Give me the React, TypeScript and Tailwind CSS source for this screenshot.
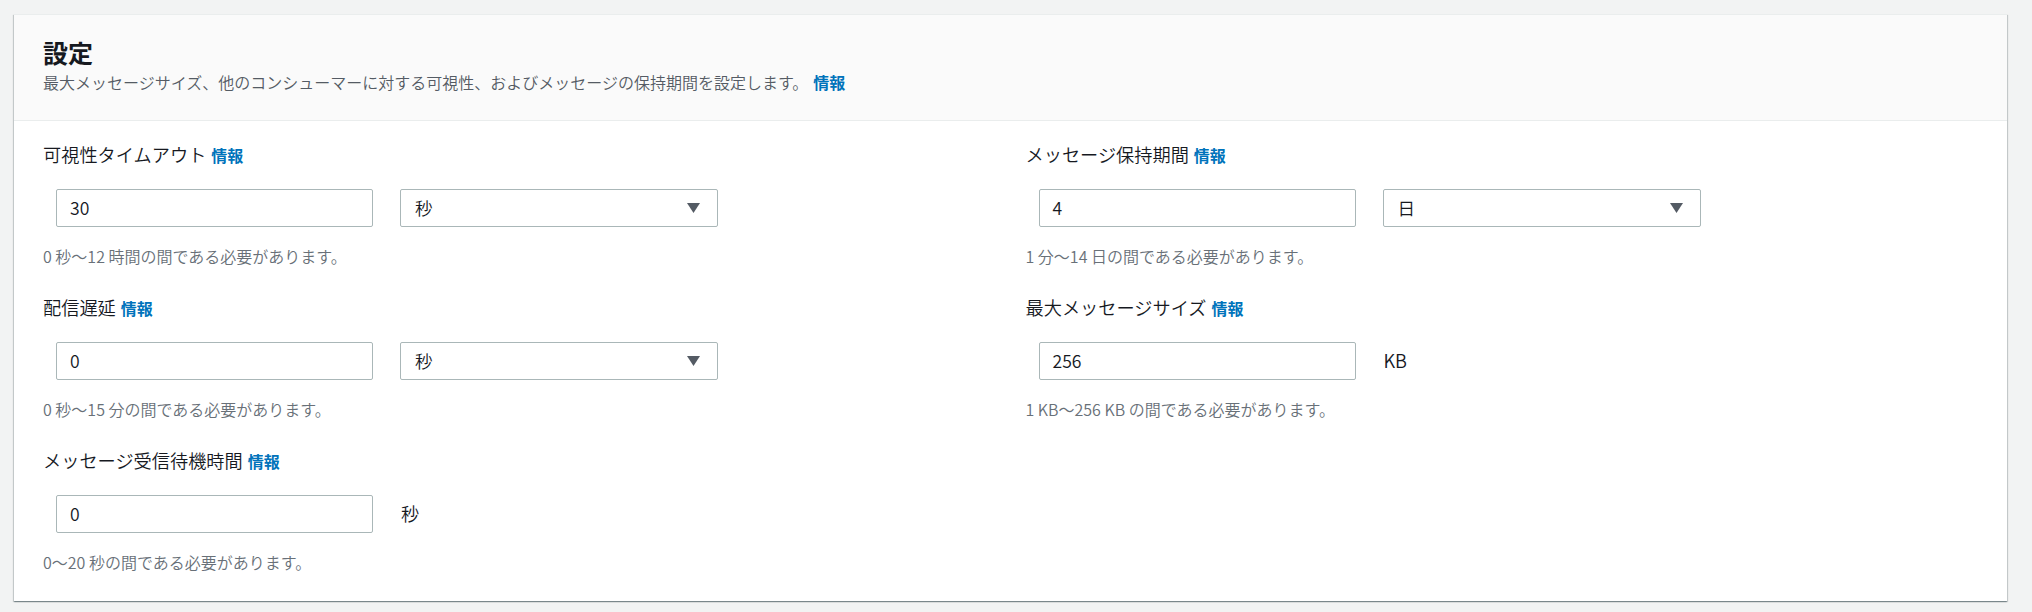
import React from "react";

function Info() {
  return <span className="ml-[5px] text-[16px] font-bold text-[#0073bb]">情報</span>;
}

function Field({ label, hint, children }: { label: string; hint: string; children: React.ReactNode }) {
  return (
    <div className="flex flex-col">
      <div className="h-6 leading-6 text-[18.2px] font-[350] text-[#16191f] whitespace-nowrap">
        {label}
        <Info />
      </div>
      <div className="mt-[23px] pl-[13px] flex items-center gap-[27px]">{children}</div>
      <div className="mt-[18px] text-[16px] font-[350] leading-[22px] text-[#687078] whitespace-nowrap">{hint}</div>
    </div>
  );
}

function TextBox({ value }: { value: string }) {
  return (
    <div className="w-[317px] h-[38px] border border-[#aab7b8] rounded-[2px] bg-white flex items-center px-[13px] text-[17.6px] font-[350] text-[#16191f]">
      {value}
    </div>
  );
}

function SelectBox({ value }: { value: string }) {
  return (
    <div className="w-[318px] h-[38px] border border-[#aab7b8] rounded-[2px] bg-white flex items-center justify-between pl-[14px] pr-[17px] text-[17.6px] font-[350] text-[#16191f]">
      <span>{value}</span>
      <svg width="13" height="10" viewBox="0 0 13 10">
        <path d="M0 0 H13 L6.5 10 Z" fill="#545b64" />
      </svg>
    </div>
  );
}

function Suffix({ text }: { text: string }) {
  return <span className="pl-[1px] text-[18.2px] font-[350] text-[#16191f]">{text}</span>;
}

export default function App() {
  return (
    <div className="min-h-[612px] bg-[#f2f3f3] pl-[14px] pr-[25px] pt-[14px] pb-[12px] font-['Noto_Sans_CJK_JP','Noto_Sans',sans-serif]">
      <div className="bg-white border-t border-[#eaeded] shadow-[0_1px_1px_0_rgba(0,28,36,0.3),1px_1px_1px_0_rgba(0,28,36,0.15),-1px_1px_1px_0_rgba(0,28,36,0.15)]">
        <div className="bg-[#fafafa] border-b border-[#eaeded] px-[29px] pt-[21px] pb-[27px]">
          <div className="text-[25px] leading-[32px] font-bold text-[#16191f]">設定</div>
          <div className="mt-[3px] text-[16px] font-[350] leading-[22px] text-[#545b64]">
            最大メッセージサイズ、他のコンシューマーに対する可視性、およびメッセージの保持期間を設定します。
            <Info />
          </div>
        </div>
        <div className="grid grid-cols-2 gap-x-[30px] gap-y-[28px] px-[29px] pt-[21px] pb-[28px]">
          <Field label="可視性タイムアウト" hint="0 秒〜12 時間の間である必要があります。">
            <TextBox value="30" />
            <SelectBox value="秒" />
          </Field>
          <Field label="メッセージ保持期間" hint="1 分〜14 日の間である必要があります。">
            <TextBox value="4" />
            <SelectBox value="日" />
          </Field>
          <Field label="配信遅延" hint="0 秒〜15 分の間である必要があります。">
            <TextBox value="0" />
            <SelectBox value="秒" />
          </Field>
          <Field label="最大メッセージサイズ" hint="1 KB〜256 KB の間である必要があります。">
            <TextBox value="256" />
            <Suffix text="KB" />
          </Field>
          <Field label="メッセージ受信待機時間" hint="0〜20 秒の間である必要があります。">
            <TextBox value="0" />
            <Suffix text="秒" />
          </Field>
          <div />
        </div>
      </div>
    </div>
  );
}
